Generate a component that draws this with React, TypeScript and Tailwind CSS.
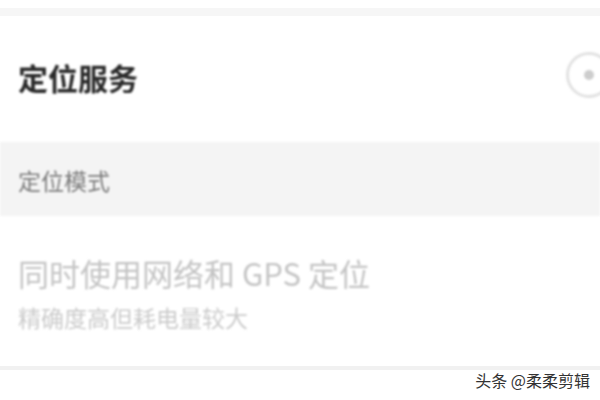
export default function App() {
  return (
    <div
      className="w-[600px] h-[400px] overflow-hidden bg-white relative"
      style={{ fontFamily: '"Noto Sans CJK SC", "Noto Sans", sans-serif' }}
    >
      <div className="h-[8px] bg-white" />
      <div className="h-[8px] bg-[#f6f6f6]" />

      {/* Location service row */}
      <div className="h-[126px] flex items-center justify-between pl-[18px] blur-[0.8px]">
        <span className="text-[30px] leading-[40px] font-bold text-[#2a2a2a] mt-[-4px]">定位服务</span>
        <div className="w-[46px] h-[46px] mr-[-12px] rounded-full border-[3px] border-[#e2e2e2] flex items-center justify-center mt-[-8px]">
          <div className="w-[10px] h-[10px] rounded-full bg-[#cdcdcd]" />
        </div>
      </div>

      {/* Section header */}
      <div className="h-[74px] bg-[#f4f4f4] flex items-center pl-[18px] blur-[0.8px]">
        <span className="text-[23px] leading-[30px] text-[#7c7c7c] mt-[2px]">定位模式</span>
      </div>

      {/* Mode row */}
      <div className="h-[150px] flex flex-col pl-[18px] pt-[36px] blur-[0.9px]">
        <span className="text-[31px] leading-[42px] text-[#c4c4c4]">同时使用网络和 GPS 定位</span>
        <span className="text-[23px] leading-[30px] mt-[8px] text-[#cbcbcb]">精确度高但耗电量较大</span>
      </div>
      <div className="h-[4px] bg-[#f1f1f1] blur-[0.5px]" />

      <div className="absolute right-[10px] bottom-[8px] text-[16px] text-[#333] [text-shadow:0_0_2px_#fff]">
        头条 @柔柔剪辑
      </div>
    </div>
  );
}
